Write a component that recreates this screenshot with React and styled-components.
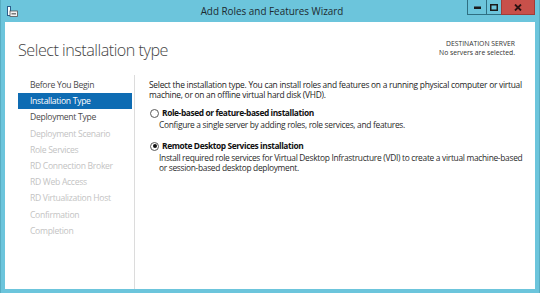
import React from "react";
import styled, { createGlobalStyle } from "styled-components";

const Global = createGlobalStyle`
  html, body { margin: 0; padding: 0; background: #6cc5dc; }
  body { font-family: "Open Sans", "Noto Sans", sans-serif; }
`;

const Window = styled.div`
  width: 540px;
  height: 293px;
  box-sizing: border-box;
  background: #6cc5dc;
  border-left: 1px solid #58adc2;
  border-right: 1px solid #58adc2;
  padding: 0 4px 4px 4px;
  display: flex;
  flex-direction: column;
`;

const TitleBar = styled.div`
  height: 22px;
  display: grid;
  grid-template-columns: 1fr auto 1fr;
  align-items: start;
`;

const AppIcon = styled.svg`
  margin: 6px 0 0 2px;
  width: 11px;
  height: 11px;
`;

const Title = styled.div`
  font-size: 9.9px;
  line-height: 23px;
  color: #1c2a30;
  padding-left: 4px;
`;

const Buttons = styled.div`
  justify-self: end;
  display: flex;
  margin-right: 0px;
`;

const CtrlButton = styled.div`
  width: ${(p) => p.$w}px;
  height: 15px;
  box-sizing: border-box;
  background: ${(p) => (p.$close ? "#c8504a" : "#6cc5dc")};
  border: 1px solid ${(p) => (p.$close ? "#a03c38" : "#2f6f82")};
  border-top: none;
  margin-left: -1px;
  display: flex;
  align-items: center;
  justify-content: center;
`;

const Client = styled.div`
  flex: 1;
  background: #ffffff;
  display: flex;
  flex-direction: column;
  min-height: 0;
`;

const Header = styled.div`
  height: 53px;
  display: flex;
  justify-content: space-between;
  align-items: flex-start;
  padding: 0 20px 0 13px;
`;

const Heading = styled.h1`
  margin: 17px 0 0 0;
  font-family: "Open Sans", "Noto Sans", sans-serif;
  font-weight: 300;
  font-size: 16.2px;
  letter-spacing: -0.5px;
  line-height: 22px;
  color: #444444;
`;

const Dest = styled.div`
  margin-top: 18px;
  text-align: right;
  font-size: 6.8px;
  line-height: 8.5px;
  color: #333;
`;

const Body = styled.div`
  flex: 1;
  display: flex;
  min-height: 0;
`;

const Nav = styled.nav`
  width: 130px;
  flex: none;
  border-right: 1px solid #dcdcdc;
  padding: 2px 0 0 13px;
  box-sizing: border-box;
  display: flex;
  flex-direction: column;
`;

const NavItem = styled.div`
  height: 16.2px;
  line-height: 16.2px;
  padding-left: 12px;
  margin-right: 2px;
  font-size: 8.6px;
  letter-spacing: -0.3px;
  white-space: nowrap;
  color: ${(p) => (p.$active ? "#ffffff" : p.$disabled ? "#c3c3c3" : "#4a4a4a")};
  background: ${(p) => (p.$active ? "#0e6cb3" : "transparent")};
`;

const Content = styled.div`
  flex: 1;
  padding: 5px 8px 0 14px;
  font-size: 8.4px;
  letter-spacing: -0.25px;
  line-height: 10px;
  color: #222;
`;

const Intro = styled.p`
  margin: 0 0 8px 0;
`;

const Option = styled.div`
  display: grid;
  grid-template-columns: 13px 1fr;
  margin-bottom: 10.5px;
`;

const Radio = styled.span`
  width: 9px;
  height: 9px;
  box-sizing: border-box;
  border: 1px solid #5a5a5a;
  border-radius: 50%;
  margin: 1px 0 0 1px;
  display: flex;
  align-items: center;
  justify-content: center;
  &::after {
    content: "";
    width: 4px;
    height: 4px;
    border-radius: 50%;
    background: ${(p) => (p.$checked ? "#111" : "transparent")};
  }
`;

const OptLabel = styled.div`
  font-weight: 700;
  letter-spacing: -0.4px;
  color: #111;
  height: 12px;
`;

const OptDesc = styled.div`
  grid-column: 2;
  margin-left: -3px;
  letter-spacing: -0.3px;
  color: #2a2a2a;
`;

const steps = [
  { t: "Before You Begin" },
  { t: "Installation Type", active: true },
  { t: "Deployment Type" },
  { t: "Deployment Scenario", disabled: true },
  { t: "Role Services", disabled: true },
  { t: "RD Connection Broker", disabled: true },
  { t: "RD Web Access", disabled: true },
  { t: "RD Virtualization Host", disabled: true },
  { t: "Confirmation", disabled: true },
  { t: "Completion", disabled: true },
];

export default function App() {
  return (
    <>
      <Global />
      <Window>
        <TitleBar>
          <AppIcon viewBox="0 0 11 11">
            <rect x="0.5" y="0.5" width="3" height="9" fill="#fff" stroke="#2c5d8a" strokeWidth="1" />
            <rect x="3" y="5" width="7.5" height="5.5" fill="#f4f4f4" stroke="#555" strokeWidth="0.8" />
            <rect x="4.5" y="7" width="4.5" height="1.5" fill="#7a7a7a" />
          </AppIcon>
          <Title>Add Roles and Features Wizard</Title>
          <Buttons>
            <CtrlButton $w={20}>
              <svg width="7" height="3"><rect width="7" height="2.5" y="0.5" fill="#1b1b1b" /></svg>
            </CtrlButton>
            <CtrlButton $w={16}>
              <svg width="8" height="7"><rect x="0.75" y="0.75" width="6.5" height="5.5" fill="none" stroke="#1b1b1b" strokeWidth="1.5" /></svg>
            </CtrlButton>
            <CtrlButton $w={34} $close>
              <svg width="8" height="7" viewBox="0 0 8 7"><path d="M1 0.5 L7 6.5 M7 0.5 L1 6.5" stroke="#2a1212" strokeWidth="1.8" /></svg>
            </CtrlButton>
          </Buttons>
        </TitleBar>
        <Client>
          <Header>
            <Heading>Select installation type</Heading>
            <Dest>
              DESTINATION SERVER
              <br />
              No servers are selected.
            </Dest>
          </Header>
          <Body>
            <Nav>
              {steps.map((s) => (
                <NavItem key={s.t} $active={s.active} $disabled={s.disabled}>
                  {s.t}
                </NavItem>
              ))}
            </Nav>
            <Content>
              <Intro>
                Select the installation type. You can install roles and features on a running physical computer or virtual
                machine, or on an offline virtual hard disk (VHD).
              </Intro>
              <Option>
                <Radio />
                <OptLabel>Role-based or feature-based installation</OptLabel>
                <OptDesc>Configure a single server by adding roles, role services, and features.</OptDesc>
              </Option>
              <Option>
                <Radio $checked />
                <OptLabel>Remote Desktop Services installation</OptLabel>
                <OptDesc>
                  Install required role services for Virtual Desktop Infrastructure (VDI) to create a virtual machine-based
                  or session-based desktop deployment.
                </OptDesc>
              </Option>
            </Content>
          </Body>
        </Client>
      </Window>
    </>
  );
}
